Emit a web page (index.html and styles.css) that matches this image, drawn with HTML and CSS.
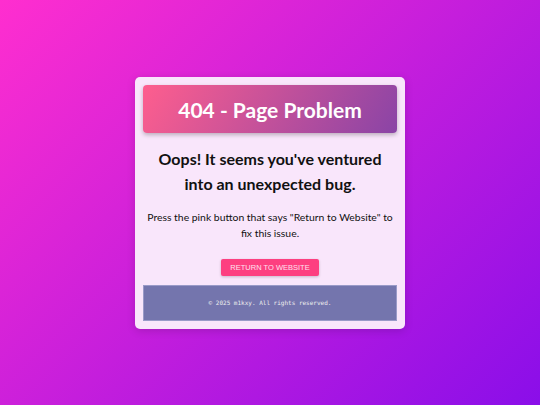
FILE: index.html
```html
<!DOCTYPE html>
<html>
<head>
<meta charset="utf-8">
<link rel="stylesheet" href="styles.css">
</head>
<body>
<div class="card">
  <div class="header"><h1>404 - Page Problem</h1></div>
  <h2>Oops! It seems you've ventured into an unexpected bug.</h2>
  <p>Press the pink button that says "Return to Website" to fix this issue.</p>
  <a class="btn" href="#">Return to Website</a>
  <div class="footer">© 2025 m1kxy. All rights reserved.</div>
</div>
</body>
</html>
```
FILE: styles.css
```css
html, body { height: 100%; }
body {
  margin: 0;
  background: linear-gradient(135deg, #ff2ecf 0%, #8a0ee9 100%);
  display: flex;
  align-items: center;
  justify-content: center;
  font-family: Lato, sans-serif;
}
.card {
  width: 254px;
  padding: 8px;
  background: #f9e6fb;
  border-radius: 5px;
  box-shadow: 0 2px 8px rgba(0,0,0,0.15);
  display: flex;
  flex-direction: column;
  align-items: center;
  text-align: center;
  margin-top: 1px;
}
.header {
  align-self: stretch;
  height: 48px;
  border-radius: 4px;
  background: linear-gradient(120deg, #fe5e8e 0%, #8a44a6 100%);
  box-shadow: 0 2px 4px rgba(0,0,0,0.25);
  display: flex;
  align-items: center;
  justify-content: center;
}
h1 {
  margin: 0;
  color: #fff;
  font-size: 21px;
  font-weight: bold;
}
h2 {
  margin: 13px 0 0;
  font-size: 16px;
  line-height: 25px;
  color: #111;
  font-weight: bold;
}
p {
  margin: 13px 0 0;
  font-size: 10.4px;
  line-height: 16px;
  color: #111;
}
.btn {
  margin-top: 18px;
  display: block;
  width: 98px;
  height: 17px;
  line-height: 17px;
  background: #fd3f80;
  color: #fde0ee;
  font-family: "Liberation Sans", Arial, sans-serif;
  font-size: 7.5px;
  text-transform: uppercase;
  text-decoration: none;
  border-radius: 2px;
  box-shadow: 0 1px 3px rgba(0,0,0,0.2);
}
.footer {
  align-self: stretch;
  margin-top: 9px;
  height: 34px;
  line-height: 34px;
  background: #7475ad;
  border: 1px solid #9a9ac8;
  color: #eee;
  font-family: "DejaVu Sans Mono", monospace;
  font-size: 6px;
}
```
